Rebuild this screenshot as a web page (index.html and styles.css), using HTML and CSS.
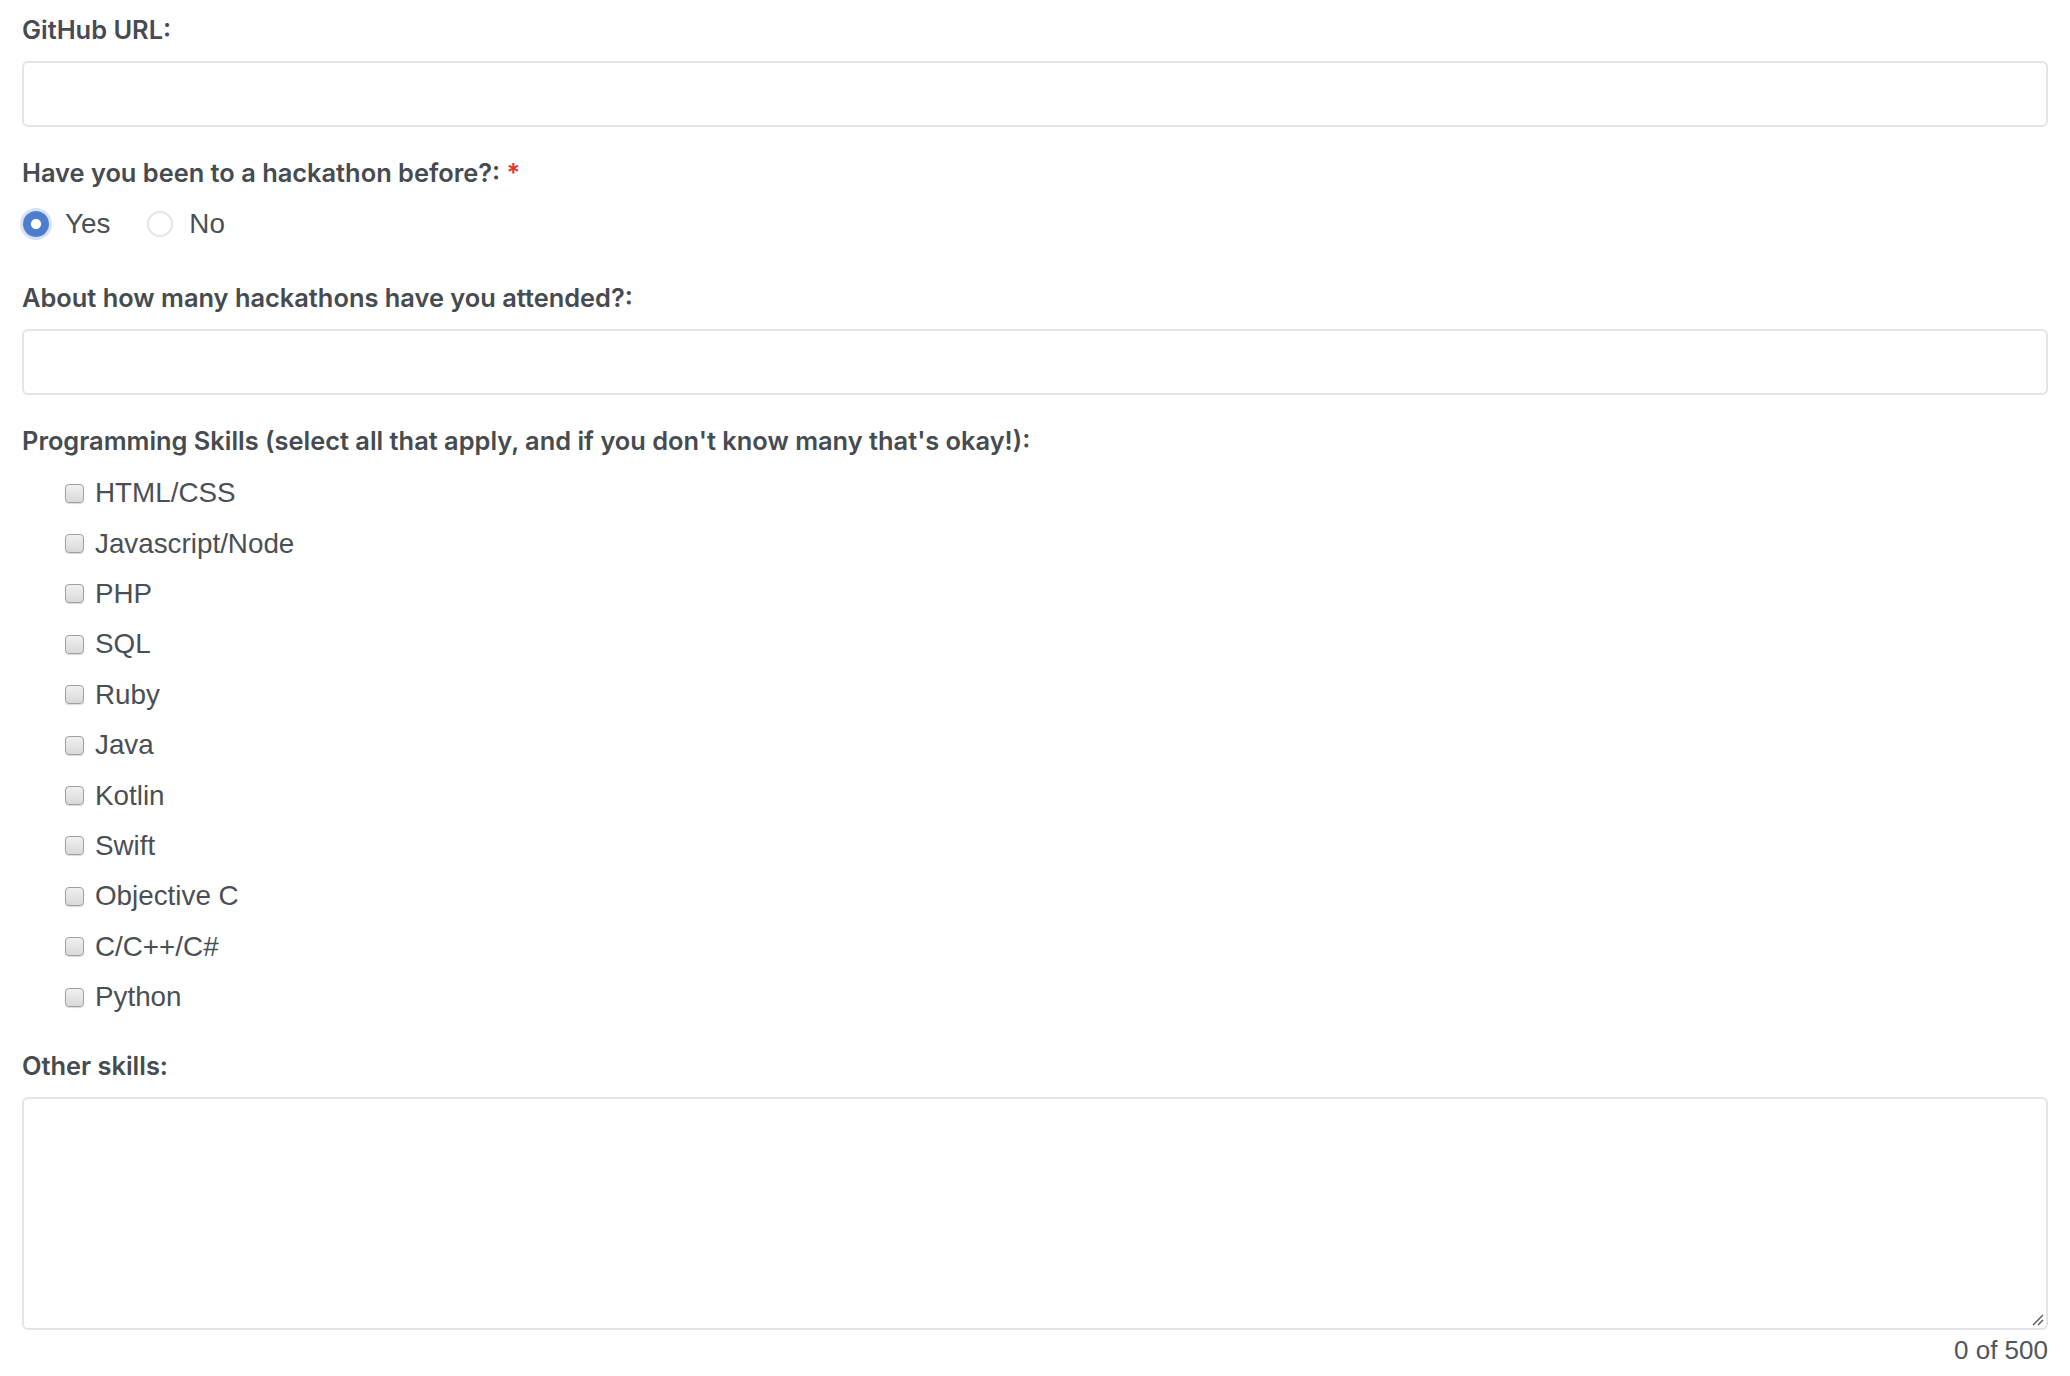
FILE: index.html
```html
<!DOCTYPE html>
<html lang="en">
<head>
<meta charset="utf-8">
<title>Application form</title>
<link rel="stylesheet" href="styles.css">
</head>
<body>
<form class="form">
  <div class="field">
    <label class="label" for="github">GitHub URL:</label>
    <input class="input" id="github" type="text">
  </div>

  <div class="field field-radio">
    <div class="label">Have you been to a hackathon before?: <span class="req">*</span></div>
    <div class="radio-row">
      <label class="radio-opt"><span class="radio radio-on"></span><span class="opt-text">Yes</span></label>
      <label class="radio-opt"><span class="radio"></span><span class="opt-text">No</span></label>
    </div>
  </div>

  <div class="field">
    <label class="label" for="count">About how many hackathons have you attended?:</label>
    <input class="input" id="count" type="text">
  </div>

  <div class="field field-check">
    <div class="label">Programming Skills (select all that apply, and if you don't know many that's okay!):</div>
    <ul class="checks">
      <li class="check-row"><span class="box"></span><span class="opt-text">HTML/CSS</span></li>
      <li class="check-row"><span class="box"></span><span class="opt-text">Javascript/Node</span></li>
      <li class="check-row"><span class="box"></span><span class="opt-text">PHP</span></li>
      <li class="check-row"><span class="box"></span><span class="opt-text">SQL</span></li>
      <li class="check-row"><span class="box"></span><span class="opt-text">Ruby</span></li>
      <li class="check-row"><span class="box"></span><span class="opt-text">Java</span></li>
      <li class="check-row"><span class="box"></span><span class="opt-text">Kotlin</span></li>
      <li class="check-row"><span class="box"></span><span class="opt-text">Swift</span></li>
      <li class="check-row"><span class="box"></span><span class="opt-text">Objective C</span></li>
      <li class="check-row"><span class="box"></span><span class="opt-text">C/C++/C#</span></li>
      <li class="check-row"><span class="box"></span><span class="opt-text">Python</span></li>
    </ul>
  </div>

  <div class="field field-area">
    <label class="label" for="other">Other skills:</label>
    <div class="area-wrap">
      <textarea class="area" id="other"></textarea>
      <svg class="grip" width="14" height="14" viewBox="0 0 14 14"><path d="M13 3 L3 13 M13 8 L8 13" stroke="#555" stroke-width="1.4" fill="none"/></svg>
    </div>
    <div class="counter">0 of 500</div>
  </div>
</form>
</body>
</html>
```

FILE: styles.css
```css
html, body {
  margin: 0;
  padding: 0;
  background: #ffffff;
}

.form {
  padding: 13px 22px 0 22px;
  font-family: "Liberation Sans", Arial, sans-serif;
  color: #4a4f55;
}

.field {
  margin: 0 0 29px 0;
}

.label {
  display: block;
  font-family: Inter, "Noto Sans", sans-serif;
  font-weight: 600;
  font-size: 25.4px;
  line-height: 34px;
  color: #464b51;
  margin: 0 0 14px 0;
}

.req {
  color: #e0352b;
}

.input {
  display: block;
  box-sizing: border-box;
  width: 100%;
  height: 66px;
  border: 2px solid #e1e5ea;
  border-radius: 6px;
  background: #fff;
  padding: 0 16px;
  font-size: 24px;
  outline: none;
  margin: 0;
}

.field-radio .label {
  margin-bottom: 16px;
}

.field-radio {
  margin-bottom: 39px;
}

.radio-row {
  display: flex;
  align-items: center;
  height: 36px;
  gap: 36px;
}

.radio-opt {
  display: flex;
  align-items: center;
  gap: 16px;
}

.radio {
  box-sizing: border-box;
  width: 26px;
  height: 26px;
  border-radius: 50%;
  border: 2px solid #e1e5ea;
  background: #fff;
  margin-left: 1px;
}

.radio-on {
  border: none;
  background: radial-gradient(circle, #ffffff 0 4.6px, #4d7dcc 5.6px);
  box-shadow: 0 0 0 3px #d6e1f3;
}

.opt-text {
  font-family: "Liberation Sans", Arial, sans-serif;
  font-size: 27.8px;
  line-height: 36px;
  color: #4a4f55;
}

.field-check .label {
  margin-bottom: 10px;
}

.field-check {
  margin-bottom: 27px;
}

.checks {
  list-style: none;
  margin: 0;
  padding: 0 0 0 43px;
}

.check-row {
  display: flex;
  align-items: center;
  height: 50.4px;
  gap: 11px;
}

.box {
  box-sizing: border-box;
  width: 19px;
  height: 19px;
  border-radius: 4px;
  border: 1px solid #a0a0a0;
  background: linear-gradient(#f0f0f0, #d9d9d9);
  box-shadow: 0 1px 1px rgba(0, 0, 0, 0.15);
}

.area-wrap {
  position: relative;
}

.area {
  display: block;
  box-sizing: border-box;
  width: 100%;
  height: 233px;
  border: 2px solid #e1e5ea;
  border-radius: 6px;
  background: #fff;
  resize: none;
  outline: none;
  margin: 0;
  padding: 12px 16px;
  font-size: 24px;
}

.grip {
  position: absolute;
  right: 4px;
  bottom: 4px;
}

.counter {
  text-align: right;
  font-family: "Liberation Sans", Arial, sans-serif;
  font-size: 26px;
  line-height: 30px;
  margin-top: 5px;
  color: #50555b;
}
```
